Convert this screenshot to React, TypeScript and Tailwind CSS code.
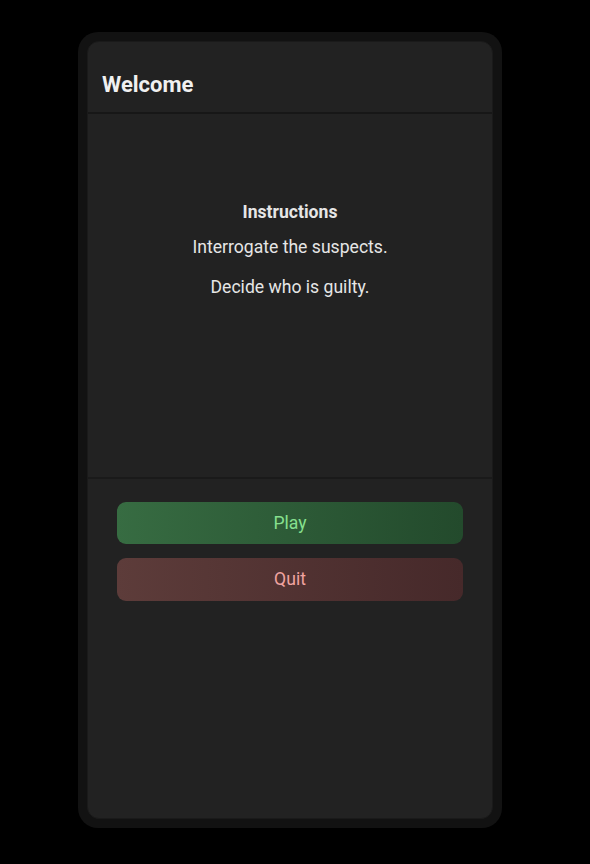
export default function App() {
  return (
    <div
      className="min-h-screen w-full bg-black pt-[32px] pl-[78px]"
      style={{ fontFamily: 'Roboto, "Liberation Sans", sans-serif' }}
    >
      <div className="w-[424px] h-[796px] rounded-[20px] bg-[#121212] p-[9px]">
        <div className="h-full w-full rounded-[12px] bg-[#222222] border border-[#1a1a1a] flex flex-col overflow-hidden">
          <div className="h-[72px] shrink-0 flex items-center px-[14px] pt-[14px] border-b-2 border-[#171717]">
            <h1 className="text-[22px] font-bold text-[#f0f0f0]">Welcome</h1>
          </div>
          <div className="h-[365px] shrink-0 flex flex-col items-center pt-[88px] text-[17.6px] text-[#e6e6e6] border-b-2 border-[#1a1a1a]">
            <p className="font-bold leading-[20px]">Instructions</p>
            <p className="mt-[15px] leading-[20px]">Interrogate the suspects.</p>
            <p className="mt-[20px] leading-[20px]">Decide who is guilty.</p>
          </div>
          <div className="flex flex-col gap-[14px] px-[29px] pt-[23px]">
            <button className="h-[42px] rounded-[9px] bg-gradient-to-r from-[#376c42] to-[#234a2c] text-[17.6px] text-[#86e08e]">
              Play
            </button>
            <button className="h-[43px] rounded-[9px] bg-gradient-to-r from-[#5d3c3a] to-[#46292a] text-[17.6px] text-[#f0a3a0]">
              Quit
            </button>
          </div>
        </div>
      </div>
    </div>
  );
}
